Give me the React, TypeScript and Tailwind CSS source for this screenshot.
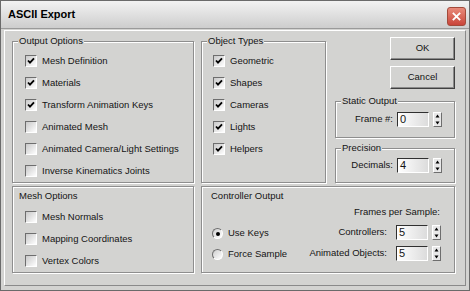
import React from "react";

const face = "bg-[#d3d3d1]";

function Check({ label, checked }: { label: string; checked?: boolean }) {
  return (
    <div className="flex h-[22px] items-center gap-[5px]">
      <div className="relative h-[12px] w-[12px] border border-t-[#6e6e6e] border-l-[#6e6e6e] border-b-white border-r-white bg-gradient-to-br from-[#c9c9c9] to-white">
        {checked && (
          <svg viewBox="0 0 10 10" className="absolute inset-0 h-[10px] w-[10px]">
            <path d="M2 4.5 L4 6.7 L8 2.3" stroke="#000" strokeWidth="1.8" fill="none" />
          </svg>
        )}
      </div>
      <span>{label}</span>
    </div>
  );
}

function Radio({ label, on }: { label: string; on?: boolean }) {
  return (
    <div className="flex h-[21px] items-center gap-[5px]">
      <div className="flex h-[11px] w-[11px] items-center justify-center rounded-full border border-t-[#6e6e6e] border-l-[#6e6e6e] border-b-white border-r-white bg-gradient-to-br from-[#cfcfcf] to-white">
        {on && <div className="h-[4px] w-[4px] rounded-full bg-black" />}
      </div>
      <span>{label}</span>
    </div>
  );
}

function Spinner({ value }: { value: string }) {
  return (
    <div className="flex items-center gap-[4px]">
      <div className="flex h-[15px] w-[32px] items-center border border-t-[#303030] border-l-[#303030] border-b-white border-r-white bg-gradient-to-r from-white to-[#dcdcdc] pl-[2px] text-[11px] leading-none">
        {value}
      </div>
      <div className="flex h-[15px] w-[9px] flex-col border border-t-white border-l-white border-b-[#6e6e6e] border-r-[#6e6e6e] bg-[#e8e8e8]">
        <svg viewBox="0 0 7 6" className="h-[6px] w-[7px]">
          <path d="M3.5 1.5 L5.5 4.5 L1.5 4.5 Z" fill="#000" />
        </svg>
        <svg viewBox="0 0 7 6" className="mt-[1px] h-[6px] w-[7px]">
          <path d="M1.5 1.5 L5.5 1.5 L3.5 4.5 Z" fill="#000" />
        </svg>
      </div>
    </div>
  );
}

function Group({ title, className, children }: { title: string; className: string; children: React.ReactNode }) {
  return (
    <div className={`relative border border-[#8e8e8e] shadow-[inset_1px_1px_0_#fff,1px_1px_0_#fff] ${className}`}>
      <span className={`absolute -top-[7px] left-[5px] px-[1px] leading-[12px] ${face}`}>{title}</span>
      {children}
    </div>
  );
}

function Button({ label }: { label: string }) {
  return (
    <div className="flex h-[23px] w-[65px] items-center justify-center border border-t-white border-l-white border-b-[#404040] border-r-[#404040] shadow-[inset_-1px_-1px_0_#8a8a8a]">
      {label}
    </div>
  );
}

export default function App() {
  return (
    <div className={`flex h-[291px] w-[470px] flex-col border border-[#6a6a6a] ${face} font-['Liberation_Sans',Arial,sans-serif] text-[9.5px] text-[#141414]`}>
      <div className="flex h-[28px] items-center justify-between border-b border-[#9a9a9a] bg-gradient-to-b from-[#f2f2f2] via-[#e0e0e0] to-[#cdcdcd] pl-[7px] pr-[3px]">
        <span className="text-[11px] font-bold text-black">ASCII Export</span>
        <div className="mt-[4px] flex h-[19px] w-[19px] items-center justify-center rounded-[3px] border border-[#a24a3a] bg-gradient-to-b from-[#e88a7a] to-[#c9443a]">
          <svg viewBox="0 0 12 12" className="h-[11px] w-[11px]">
            <path d="M2 2 L10 10 M10 2 L2 10" stroke="#fff" strokeWidth="2" />
          </svg>
        </div>
      </div>

      <div className="flex-1 px-[3px] pb-[4px] pt-[1px]">
        <div className="h-full border border-t-white border-l-white border-b-[#8a8a8a] border-r-[#8a8a8a] pl-[7px] pt-[6px]">
          <div className="flex h-[146px]">
            <Group title="Output Options" className="mt-[4px] h-[142px] w-[182px] pl-[12px] pt-[8px]">
              <Check label="Mesh Definition" checked />
              <Check label="Materials" checked />
              <Check label="Transform Animation Keys" checked />
              <Check label="Animated Mesh" />
              <Check label="Animated Camera/Light Settings" />
              <Check label="Inverse Kinematics Joints" />
            </Group>
            <Group title="Object Types" className="ml-[7px] mt-[4px] h-[142px] w-[125px] pl-[11px] pt-[8px]">
              <Check label="Geometric" checked />
              <Check label="Shapes" checked />
              <Check label="Cameras" checked />
              <Check label="Lights" checked />
              <Check label="Helpers" checked />
            </Group>
            <div className="ml-[9px] flex w-[120px] flex-col">
              <div className="flex flex-col items-end gap-[6px]">
                <Button label="OK" />
                <Button label="Cancel" />
              </div>
              <Group title="Static Output" className="mt-[12px] flex h-[37px] items-center justify-end pr-[12px]">
                <span className="mr-[4px]">Frame #:</span>
                <Spinner value="0" />
              </Group>
              <Group title="Precision" className="mt-[10px] flex h-[36px] items-center justify-end pr-[12px]">
                <span className="mr-[4px]">Decimals:</span>
                <Spinner value="4" />
              </Group>
            </div>
          </div>

          <div className="mt-[3px] flex">
            <div className="h-[87px] w-[182px] border border-[#8e8e8e] pl-[12px] pt-[2px] shadow-[inset_1px_1px_0_#fff,1px_1px_0_#fff]">
              <div className="-ml-[6px] h-[14px] leading-[14px]">Mesh Options</div>
              <div className="mt-[3px]">
                <Check label="Mesh Normals" />
                <Check label="Mapping Coordinates" />
                <Check label="Vertex Colors" />
              </div>
            </div>
            <div className="ml-[7px] h-[87px] w-[254px] border border-[#8e8e8e] pl-[9px] pr-[13px] pt-[2px] shadow-[inset_1px_1px_0_#fff,1px_1px_0_#fff]">
              <div className="h-[14px] leading-[14px]">Controller Output</div>
              <div className="flex justify-between">
                <div className="pl-[1px] pt-[20px]">
                  <Radio label="Use Keys" on />
                  <Radio label="Force Sample" />
                </div>
                <div className="flex flex-col items-end">
                  <div className="mt-[3px] h-[12px] pr-[1px] leading-[12px]">Frames per Sample:</div>
                  <div className="mt-[4px] flex h-[21px] items-center">
                    <span className="mr-[9px]">Controllers:</span>
                    <Spinner value="5" />
                  </div>
                  <div className="flex h-[21px] items-center">
                    <span className="mr-[9px]">Animated Objects:</span>
                    <Spinner value="5" />
                  </div>
                </div>
              </div>
            </div>
          </div>
        </div>
      </div>
    </div>
  );
}
